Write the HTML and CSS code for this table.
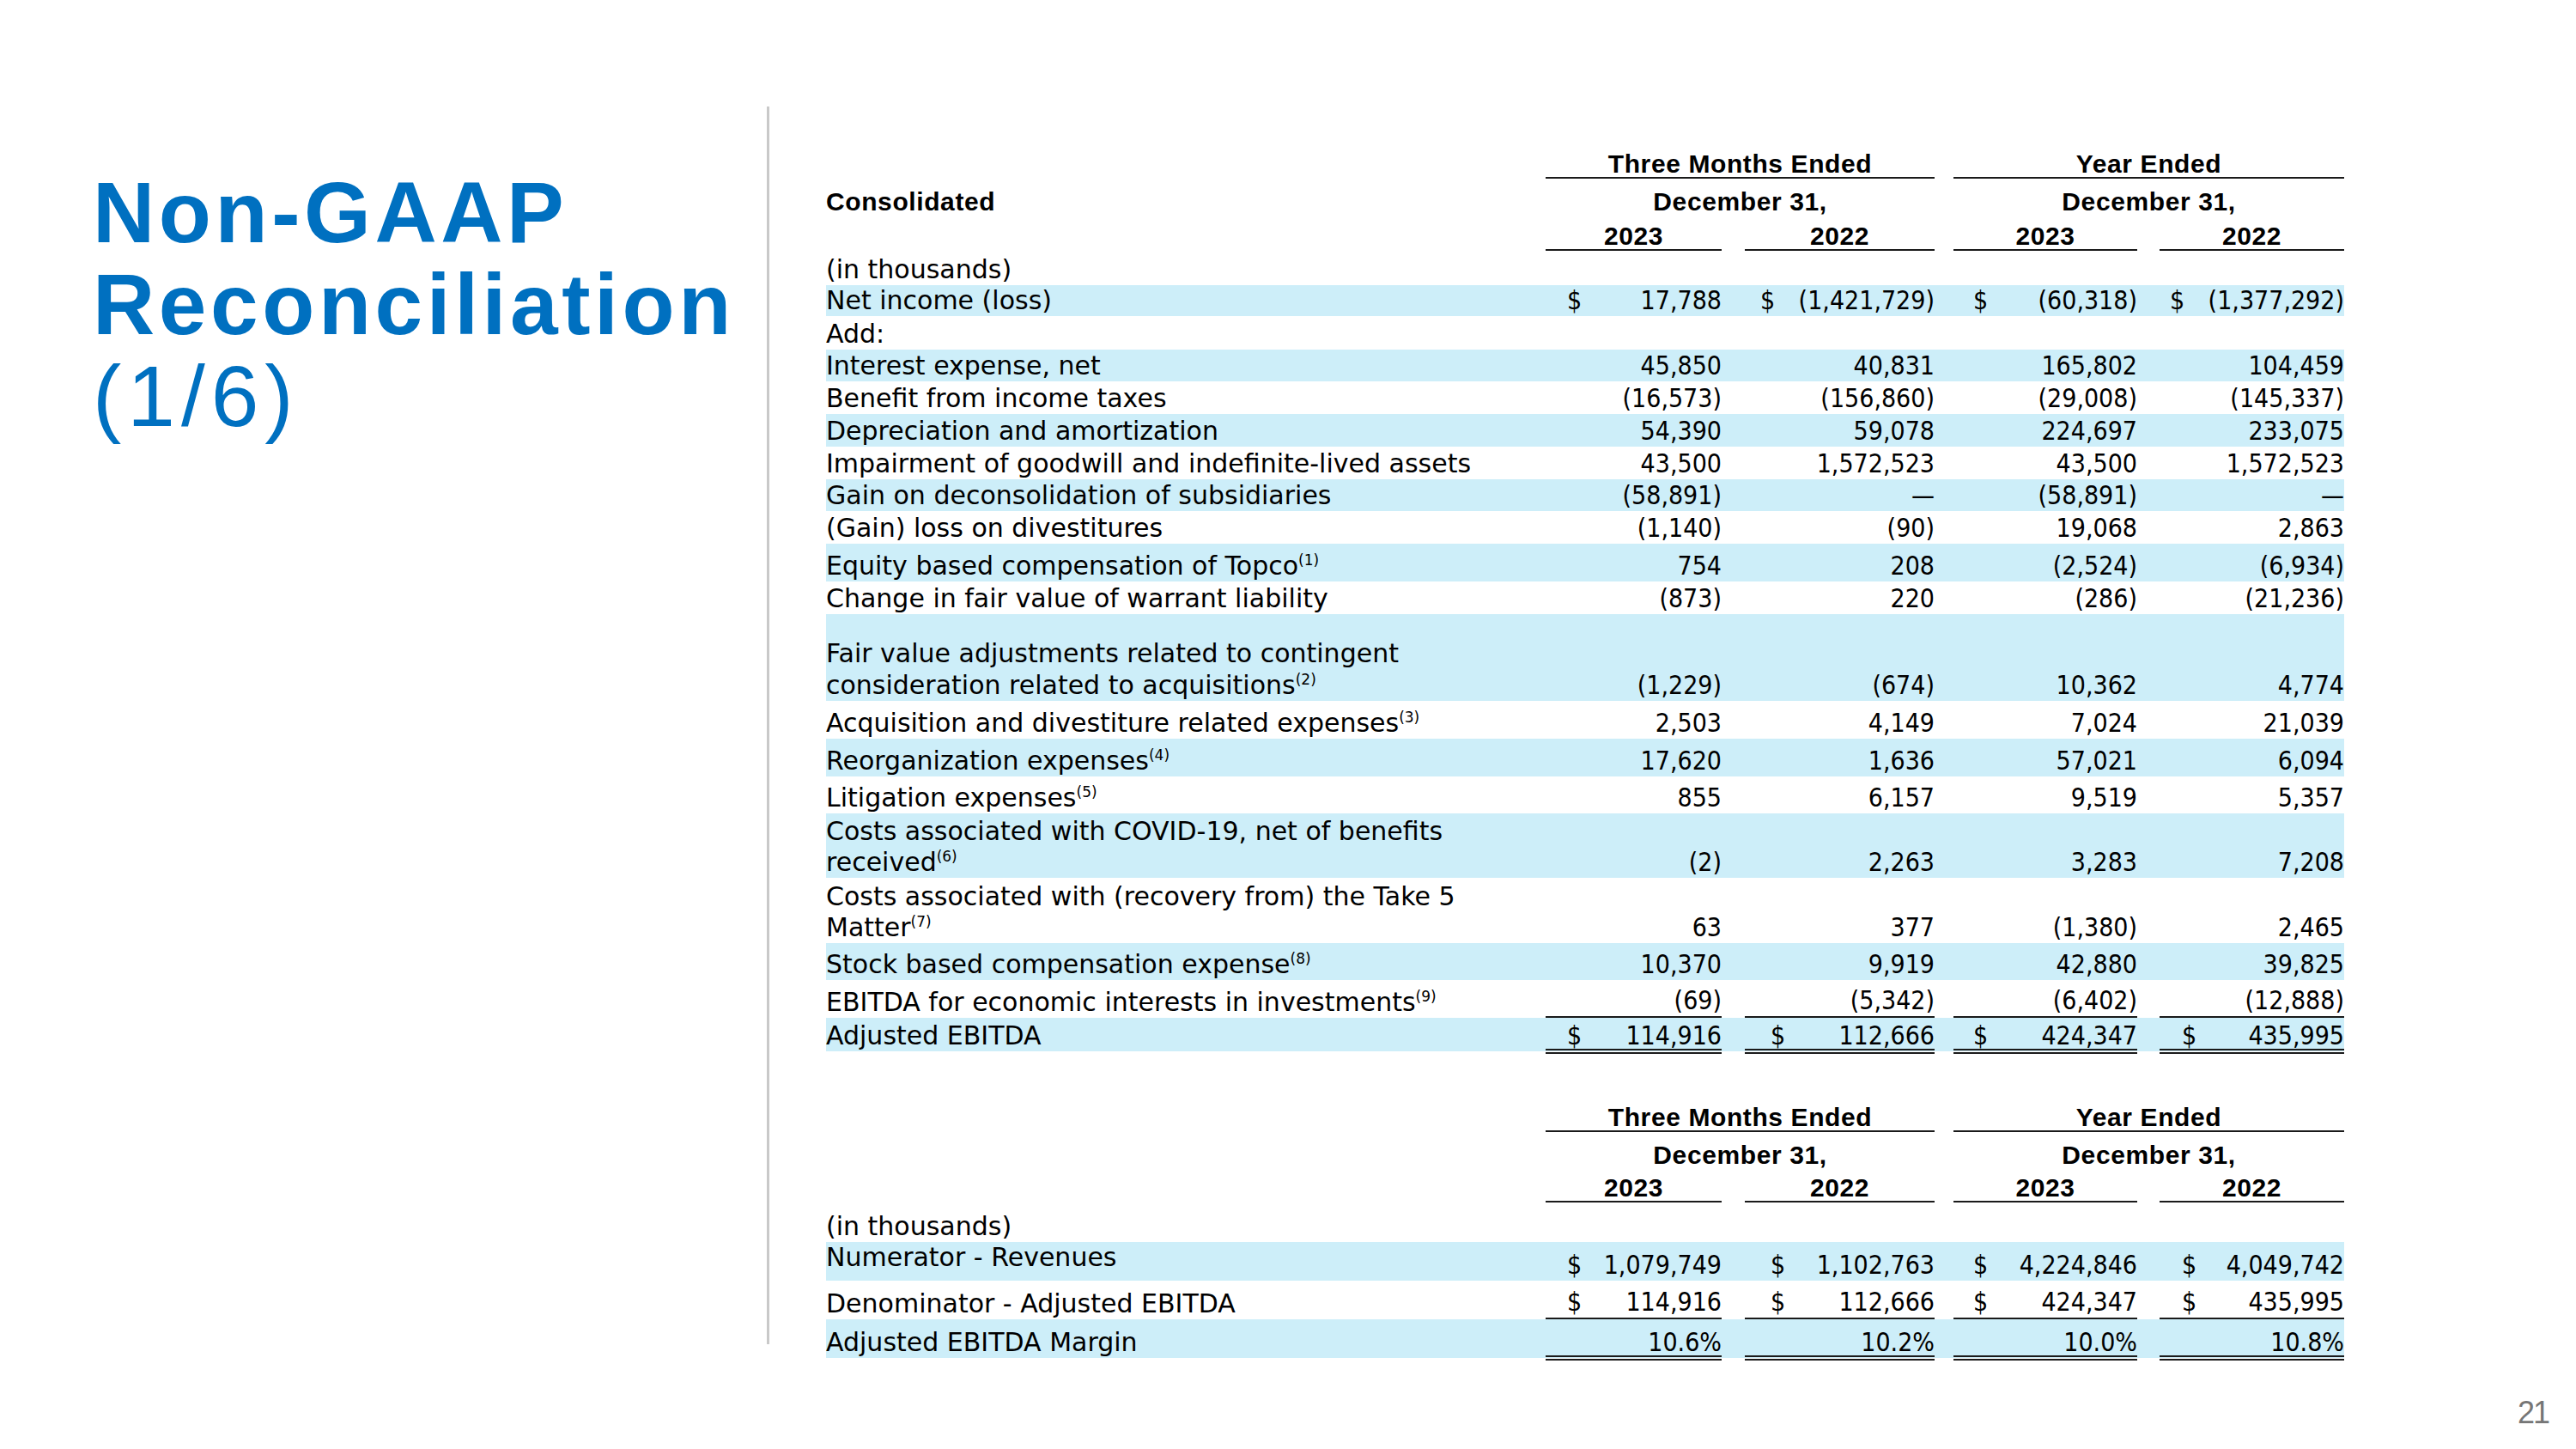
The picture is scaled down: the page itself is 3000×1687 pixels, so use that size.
FILE: index.html
```html
<!DOCTYPE html>
<html lang="en">
<head>
<meta charset="utf-8">
<title>Non-GAAP Reconciliation (1/6)</title>
<link rel="stylesheet" href="styles.css">
</head>
<body>
<div class="slide">
  <div class="left">
    <h1 class="title"><span class="tl bold">Non-GAAP</span><span class="tl bold">Reconciliation</span><span class="tl reg">(1/6)</span></h1>
  </div>
  <div class="divider"></div>
  <div class="right">
    <div class="tbl t1">
      <div class="row hd1"><div class="lab"></div><div class="sp s1"><span>Three Months Ended</span></div><div class="sp s2"><span>Year Ended</span></div></div>
      <div class="row hd2"><div class="lab hb"><span>Consolidated</span></div><div class="sp s1 nob"><span>December 31,</span></div><div class="sp s2 nob"><span>December 31,</span></div></div>
      <div class="row hd3"><div class="lab"></div><div class="yr c1"><span>2023</span></div><div class="yr c2"><span>2022</span></div><div class="yr c3"><span>2023</span></div><div class="yr c4"><span>2022</span></div></div>
      <div class="row r40"><div class="lab"><span>(in thousands)</span></div></div>

      <div class="row r36 hl ni"><div class="lab"><span>Net income (loss)</span></div>
        <div class="n c1"><span class="d">$</span><span class="v">17,788</span></div>
        <div class="n c2"><span class="d">$</span><span class="v">(1,421,729)</span></div>
        <div class="n c3"><span class="d">$</span><span class="v">(60,318)</span></div>
        <div class="n c4"><span class="d">$</span><span class="v">(1,377,292)</span></div></div>
      <div class="row r39"><div class="lab"><span>Add:</span></div></div>
      <div class="row r37 hl"><div class="lab"><span>Interest expense, net</span></div>
        <div class="n c1"><span class="v">45,850</span></div><div class="n c2"><span class="v">40,831</span></div><div class="n c3"><span class="v">165,802</span></div><div class="n c4"><span class="v">104,459</span></div></div>
      <div class="row r38"><div class="lab"><span>Benefit from income taxes</span></div>
        <div class="n c1"><span class="v">(16,573)</span></div><div class="n c2"><span class="v">(156,860)</span></div><div class="n c3"><span class="v">(29,008)</span></div><div class="n c4"><span class="v">(145,337)</span></div></div>
      <div class="row r38 hl"><div class="lab"><span>Depreciation and amortization</span></div>
        <div class="n c1"><span class="v">54,390</span></div><div class="n c2"><span class="v">59,078</span></div><div class="n c3"><span class="v">224,697</span></div><div class="n c4"><span class="v">233,075</span></div></div>
      <div class="row r38"><div class="lab"><span>Impairment of goodwill and indefinite-lived assets</span></div>
        <div class="n c1"><span class="v">43,500</span></div><div class="n c2"><span class="v">1,572,523</span></div><div class="n c3"><span class="v">43,500</span></div><div class="n c4"><span class="v">1,572,523</span></div></div>
      <div class="row r37 hl"><div class="lab"><span>Gain on deconsolidation of subsidiaries</span></div>
        <div class="n c1"><span class="v">(58,891)</span></div><div class="n c2"><span class="v">—</span></div><div class="n c3"><span class="v">(58,891)</span></div><div class="n c4"><span class="v">—</span></div></div>
      <div class="row r38"><div class="lab"><span>(Gain) loss on divestitures</span></div>
        <div class="n c1"><span class="v">(1,140)</span></div><div class="n c2"><span class="v">(90)</span></div><div class="n c3"><span class="v">19,068</span></div><div class="n c4"><span class="v">2,863</span></div></div>
      <div class="row r44 hl"><div class="lab"><span>Equity based compensation of Topco<sup>(1)</sup></span></div>
        <div class="n c1"><span class="v">754</span></div><div class="n c2"><span class="v">208</span></div><div class="n c3"><span class="v">(2,524)</span></div><div class="n c4"><span class="v">(6,934)</span></div></div>
      <div class="row r38"><div class="lab"><span>Change in fair value of warrant liability</span></div>
        <div class="n c1"><span class="v">(873)</span></div><div class="n c2"><span class="v">220</span></div><div class="n c3"><span class="v">(286)</span></div><div class="n c4"><span class="v">(21,236)</span></div></div>
      <div class="row r101 hl"><div class="lab l37"><span>Fair value adjustments related to contingent<br>consideration related to acquisitions<sup>(2)</sup></span></div>
        <div class="n c1"><span class="v">(1,229)</span></div><div class="n c2"><span class="v">(674)</span></div><div class="n c3"><span class="v">10,362</span></div><div class="n c4"><span class="v">4,774</span></div></div>
      <div class="row r44"><div class="lab"><span>Acquisition and divestiture related expenses<sup>(3)</sup></span></div>
        <div class="n c1"><span class="v">2,503</span></div><div class="n c2"><span class="v">4,149</span></div><div class="n c3"><span class="v">7,024</span></div><div class="n c4"><span class="v">21,039</span></div></div>
      <div class="row r44 hl"><div class="lab"><span>Reorganization expenses<sup>(4)</sup></span></div>
        <div class="n c1"><span class="v">17,620</span></div><div class="n c2"><span class="v">1,636</span></div><div class="n c3"><span class="v">57,021</span></div><div class="n c4"><span class="v">6,094</span></div></div>
      <div class="row r43"><div class="lab"><span>Litigation expenses<sup>(5)</sup></span></div>
        <div class="n c1"><span class="v">855</span></div><div class="n c2"><span class="v">6,157</span></div><div class="n c3"><span class="v">9,519</span></div><div class="n c4"><span class="v">5,357</span></div></div>
      <div class="row r75 hl"><div class="lab"><span>Costs associated with COVID-19, net of benefits<br>received<sup>(6)</sup></span></div>
        <div class="n c1"><span class="v">(2)</span></div><div class="n c2"><span class="v">2,263</span></div><div class="n c3"><span class="v">3,283</span></div><div class="n c4"><span class="v">7,208</span></div></div>
      <div class="row r76"><div class="lab"><span>Costs associated with (recovery from) the Take 5<br>Matter<sup>(7)</sup></span></div>
        <div class="n c1"><span class="v">63</span></div><div class="n c2"><span class="v">377</span></div><div class="n c3"><span class="v">(1,380)</span></div><div class="n c4"><span class="v">2,465</span></div></div>
      <div class="row r43 hl"><div class="lab"><span>Stock based compensation expense<sup>(8)</sup></span></div>
        <div class="n c1"><span class="v">10,370</span></div><div class="n c2"><span class="v">9,919</span></div><div class="n c3"><span class="v">42,880</span></div><div class="n c4"><span class="v">39,825</span></div></div>
      <div class="row r44 under"><div class="lab"><span>EBITDA for economic interests in investments<sup>(9)</sup></span></div>
        <div class="n c1"><span class="v">(69)</span></div><div class="n c2"><span class="v">(5,342)</span></div><div class="n c3"><span class="v">(6,402)</span></div><div class="n c4"><span class="v">(12,888)</span></div></div>
      <div class="row r39 hl total"><div class="lab"><span>Adjusted EBITDA</span></div>
        <div class="n c1"><span class="d">$</span><span class="v">114,916</span></div>
        <div class="n c2"><span class="d">$</span><span class="v">112,666</span></div>
        <div class="n c3"><span class="d">$</span><span class="v">424,347</span></div>
        <div class="n c4"><span class="d">$</span><span class="v">435,995</span></div></div>
    </div>

    <div class="tbl t2">
      <div class="row hd1"><div class="lab"></div><div class="sp s1"><span>Three Months Ended</span></div><div class="sp s2"><span>Year Ended</span></div></div>
      <div class="row hd2"><div class="lab"></div><div class="sp s1 nob"><span>December 31,</span></div><div class="sp s2 nob"><span>December 31,</span></div></div>
      <div class="row hd3b"><div class="lab"></div><div class="yr c1"><span>2023</span></div><div class="yr c2"><span>2022</span></div><div class="yr c3"><span>2023</span></div><div class="yr c4"><span>2022</span></div></div>
      <div class="row r46"><div class="lab"><span>(in thousands)</span></div></div>
      <div class="row r45 hl"><div class="lab top"><span>Numerator - Revenues</span></div>
        <div class="n c1"><span class="d">$</span><span class="v">1,079,749</span></div>
        <div class="n c2"><span class="d">$</span><span class="v">1,102,763</span></div>
        <div class="n c3"><span class="d">$</span><span class="v">4,224,846</span></div>
        <div class="n c4"><span class="d">$</span><span class="v">4,049,742</span></div></div>
      <div class="row r45 under"><div class="lab"><span>Denominator - Adjusted EBITDA</span></div>
        <div class="n c1"><span class="d">$</span><span class="v">114,916</span></div>
        <div class="n c2"><span class="d">$</span><span class="v">112,666</span></div>
        <div class="n c3"><span class="d">$</span><span class="v">424,347</span></div>
        <div class="n c4"><span class="d">$</span><span class="v">435,995</span></div></div>
      <div class="row r45 hl total"><div class="lab"><span>Adjusted EBITDA Margin</span></div>
        <div class="n c1"><span class="v">10.6%</span></div><div class="n c2"><span class="v">10.2%</span></div><div class="n c3"><span class="v">10.0%</span></div><div class="n c4"><span class="v">10.8%</span></div></div>
    </div>
  </div>
  <div class="pagenum">21</div>
</div>
</body>
</html>
```

FILE: styles.css
```css
html, body {
  margin: 0;
  padding: 0;
  background: #ffffff;
}

.slide {
  width: 3000px;
  height: 1687px;
  display: flex;
  align-items: flex-start;
  overflow: hidden;
  background: #ffffff;
  color: #000000;
}

/* ---------- left title panel ---------- */
.left {
  width: 893px;
  flex: none;
  box-sizing: border-box;
  padding-left: 108px;
  padding-top: 194px;
}

.title {
  margin: 0;
  font-size: 100px;
  line-height: 107px;
  color: #0070c0;
  letter-spacing: 4.6px;
}

.title .tl {
  display: block;
  white-space: nowrap;
}

.title .bold {
  font-family: "Liberation Sans", Arial, sans-serif;
  font-weight: 700;
}

.title .reg {
  font-family: "Liberation Sans", Arial, sans-serif;
  font-weight: 400;
  letter-spacing: 7px;
}

.divider {
  flex: none;
  width: 3px;
  height: 1441px;
  margin-top: 124px;
  background: #c9c9c9;
}

/* ---------- right tables panel ---------- */
.right {
  flex: none;
  width: 1768px;
  margin-left: 66px;
  padding-top: 170px;
}

.tbl {
  width: 1768px;
}

.t2 {
  margin-top: 56px;
}

.row {
  display: flex;
  align-items: stretch;
  box-sizing: border-box;
  font-family: "DejaVu Sans", sans-serif;
  font-size: 30px;
  line-height: 36px;
  color: #000000;
}

.row > div {
  display: flex;
  align-items: flex-end;
  box-sizing: border-box;
  flex: none;
}

.hl {
  background: #cdeef9;
}

.lab {
  width: 838px;
  white-space: nowrap;
}

.lab.l37 {
  line-height: 37px;
}

.lab.top {
  align-items: flex-start !important;
}

.lab sup {
  font-size: 17px;
  line-height: 0;
  vertical-align: 11px;
}

/* row heights */
.r36 { height: 36px; }
.r37 { height: 37px; }
.r38 { height: 38px; }
.r39 { height: 39px; }
.r40 { height: 40px; }
.r43 { height: 43px; }
.r44 { height: 44px; }
.r45 { height: 45px; }
.r46 { height: 46px; }
.r75 { height: 75px; }
.r76 { height: 76px; }
.r101 { height: 101px; }

/* header rows */
.hd1, .hd2, .hd3, .hd3b {
  font-family: "Liberation Sans", Arial, sans-serif;
  font-weight: 700;
  line-height: 30px;
  letter-spacing: 0.6px;
}

.hd1 { height: 38px; }
.hd2 { height: 42px; }
.hd3 { height: 42px; }
.hd3b { height: 40px; }

.hb {
  letter-spacing: 0.6px;
}

.sp {
  justify-content: center;
  border-bottom: 2px solid #1a1a1a;
}

.sp.nob {
  border-bottom: none;
}

.s1 { width: 453px; }
.s2 { width: 455px; margin-left: 22px; }

.yr {
  justify-content: center;
  border-bottom: 2px solid #1a1a1a;
}

/* numeric columns */
.c1 { width: 205px; }
.c2 { width: 221px; margin-left: 27px; }
.c3 { width: 214px; margin-left: 22px; }
.c4 { width: 215px; margin-left: 26px; }

.n {
  font-family: "DejaVu Sans Condensed", "DejaVu Sans", sans-serif;
  white-space: nowrap;
}

.n .v {
  margin-left: auto;
}

.c1 .d { margin-left: 25px; }
.c2 .d { margin-left: 30px; }
.c3 .d { margin-left: 23px; }
.c4 .d { margin-left: 26px; }

.ni .c2 .d { margin-left: 18px; }
.ni .c4 .d { margin-left: 12px; }

.under .n {
  border-bottom: 2px solid #1a1a1a;
}

.total .n {
  line-height: 30px;
  border-bottom: 6px double #1a1a1a;
}

.r39.total .n { height: 42px; }
.r45.total .n { height: 48px; }

/* page number */
.pagenum {
  flex: none;
  align-self: flex-end;
  margin-left: auto;
  margin-right: 32px;
  margin-bottom: 24px;
  font-family: "Liberation Sans", Arial, sans-serif;
  font-size: 36px;
  line-height: 36px;
  letter-spacing: -2px;
  color: #767676;
}
```
